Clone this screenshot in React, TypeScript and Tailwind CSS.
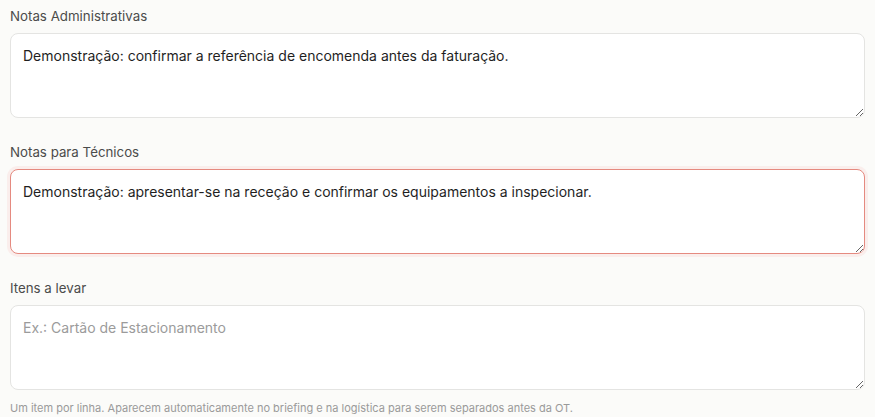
import React from 'react';

interface NoteFieldProps {
  label: string;
  value?: string;
  placeholder?: string;
  highlight?: boolean;
}

const NoteField: React.FC<NoteFieldProps> = ({ label, value, placeholder, highlight }) => {
  return (
    <div className="flex flex-col">
      <label className="mb-[7px] text-[13.3px] leading-5 text-[#4b4b4b]">{label}</label>
      <textarea
        defaultValue={value}
        placeholder={placeholder}
        rows={3}
        className={
          highlight
            ? 'h-[85px] w-full rounded-lg border border-[#e58a80] bg-white px-3 py-3 text-sm leading-5 text-[#1f1f1f] shadow-[0_0_0_3px_rgba(239,68,68,0.07)] outline-none placeholder:text-[#9b9b9b]'
            : 'h-[85px] w-full rounded-lg border border-[#e4e4e2] bg-white px-3 py-3 text-sm leading-5 text-[#1f1f1f] outline-none placeholder:text-[#9b9b9b]'
        }
      />
    </div>
  );
};

export default function App() {
  return (
    <div
      className="min-h-[417px] w-full bg-[#fbfbf9] px-[10px] pt-[6px]"
      style={{ fontFamily: 'Inter, "Noto Sans", sans-serif' }}
    >
      <div className="flex flex-col gap-[24px]">
        <NoteField
          label="Notas Administrativas"
          value="Demonstração: confirmar a referência de encomenda antes da faturação."
        />
        <NoteField
          label="Notas para Técnicos"
          value="Demonstração: apresentar-se na receção e confirmar os equipamentos a inspecionar."
          highlight
        />
        <div className="flex flex-col">
          <NoteField label="Itens a levar" placeholder="Ex.: Cartão de Estacionamento" />
          <p className="mt-[10px] text-[11px] leading-4 text-[#9a9a9a]">
            Um item por linha. Aparecem automaticamente no briefing e na logística para serem separados antes da OT.
          </p>
        </div>
      </div>
    </div>
  );
}
